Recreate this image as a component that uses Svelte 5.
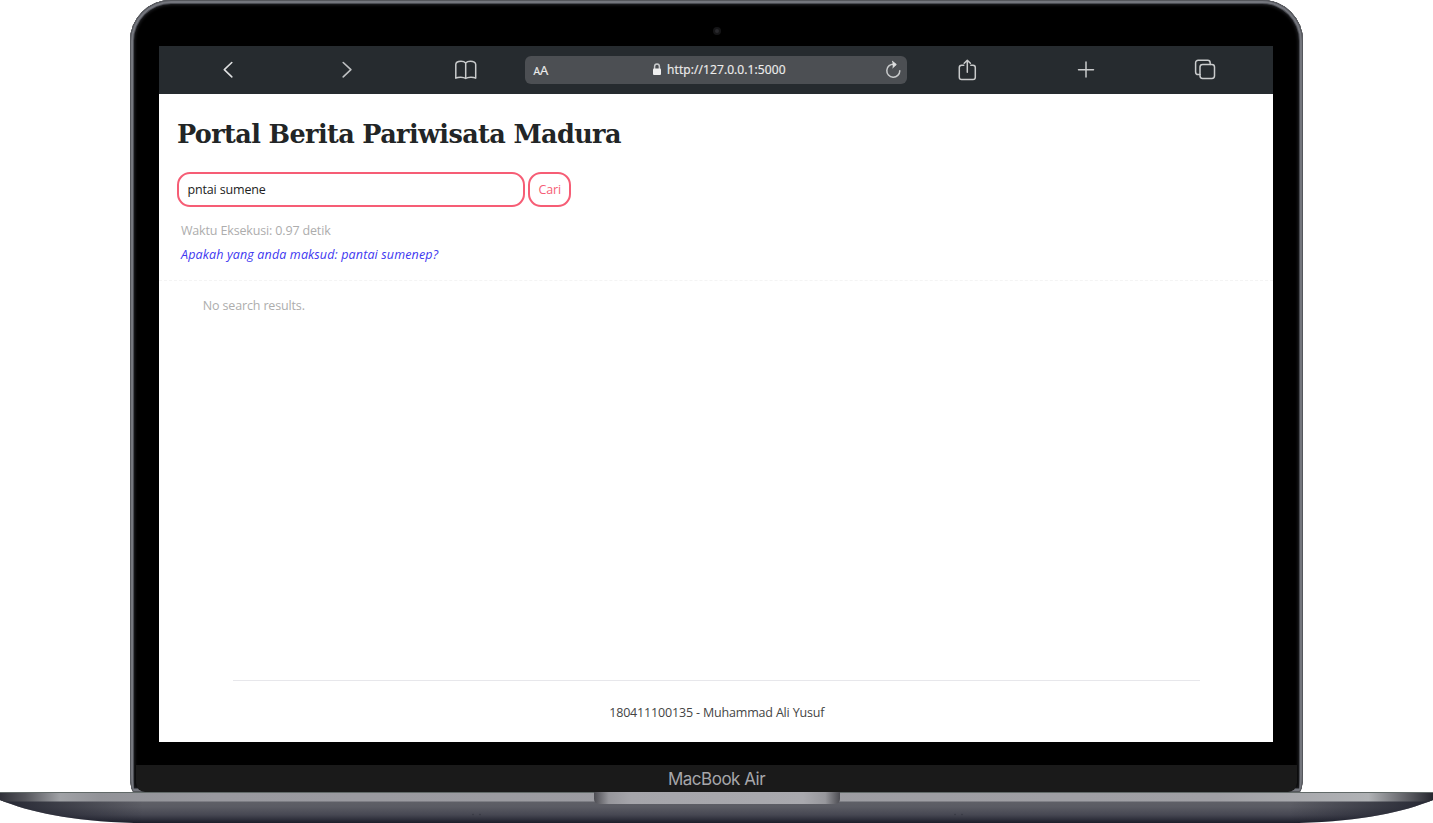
<script>
  let query = $state('pntai sumene');
</script>

<main>
  <section class="lid">
    <i class="camera"></i>
    <div class="screen">
      <nav>
        <span class="cell"><svg width="24" height="24" viewBox="0 0 24 24"><path d="M15.800 4.500 8.300 11.700l7.500 7.200" /></svg></span>
        <span class="cell"><svg width="24" height="24" viewBox="0 0 24 24"><path class="dim" d="m8.200 4.500 7.700 7.200-7.700 7.200" /></svg></span>
        <span class="cell"><svg width="26" height="24" viewBox="0 0 26 24"><path class="thin" d="M12.700 4.900c-1-1.100-2.800-1.700-4.700-1.700-3 0-5.200 1.300-5.200 3.400v13.600c2.300-1.300 7.700-1.300 9.900.3 2.300-1.600 7.700-1.600 10-.3V6.600c0-2.100-2.200-3.400-5.200-3.400-2 0-3.800.6-4.800 1.700v15.600" /></svg></span>
        <div class="address">
          <span class="size"><small>A</small>A</span>
          <span class="url"><svg width="10" height="13" viewBox="0 0 10 13"><path class="thin" d="M2.600 6V3.600a2.400 2.600 0 0 1 4.800 0V6" /><rect x="1" y="5.500" width="8" height="6.500" rx="1" class="solid" /></svg>http://127.0.0.1:5000</span>
          <svg class="reload" width="18" height="20" viewBox="0 0 18 20"><path class="thin" d="M10 4.200A6.500 6.500 0 1 0 15.800 10.700" /><path class="head" d="M8.400 1.300 12.300 4.500 8.800 7.700" /></svg>
        </div>
        <span class="cell"><svg width="24" height="24" viewBox="0 0 24 24"><path class="thin" d="M8.800 7.200H6.600A2.300 2.300 0 0 0 4.300 9.500v9.700a2.300 2.300 0 0 0 2.300 2.300h11.400a2.300 2.300 0 0 0 2.300-2.300v-9.700a2.300 2.300 0 0 0-2.300-2.300h-2.200M12.300 14.300V2.400M9.200 5.200 12.300 2.200l3.100 3" /></svg></span>
        <span class="cell"><svg width="24" height="24" viewBox="0 0 24 24"><path class="thin" d="M4.500 11.700h15M12 4.100v15" /></svg></span>
        <span class="cell"><svg width="24" height="24" viewBox="0 0 24 24"><path class="thin" d="M7 16.600H5.200a2.600 2.600 0 0 1-2.600-2.600V4.900a2.600 2.600 0 0 1 2.600-2.600h9.400a2.600 2.600 0 0 1 2.600 2.600v1.500" /><rect class="thin" x="7" y="6.500" width="14.500" height="13.900" rx="2.600" /></svg></span>
      </nav>
      <article>
        <h1>Portal Berita Pariwisata Madura</h1>
        <form onsubmit={(e) => e.preventDefault()}>
          <input bind:value={query} spellcheck="false" />
          <button>Cari</button>
        </form>
        <p class="time">Waktu Eksekusi: 0.97 detik</p>
        <p class="hint"><em>Apakah yang anda maksud: pantai sumenep?</em></p>
        <div class="divider"></div>
        <p class="none">No search results.</p>
        <footer><span>180411100135 - Muhammad Ali Yusuf</span></footer>
      </article>
    </div>
    <div class="chin"><span>MacBook Air</span></div>
  </section>
  <svg class="base" width="1433" height="31" viewBox="0 0 1433 31">
    <defs>
      <linearGradient id="deck"><stop offset="0" stop-color="#303139" /><stop offset=".018" stop-color="#56575d" /><stop offset=".042" stop-color="#a0a2a6" /><stop offset=".07" stop-color="#929398" /><stop offset=".15" stop-color="#99999f" /><stop offset=".85" stop-color="#a0a0a5" /><stop offset=".955" stop-color="#b0b2b5" /><stop offset=".985" stop-color="#55565c" /><stop offset="1" stop-color="#25262e" /></linearGradient>
      <linearGradient id="belly" x2="0" y2="1"><stop offset="0" stop-color="#606168" /><stop offset=".3" stop-color="#5a5b63" /><stop offset=".65" stop-color="#464752" /><stop offset="1" stop-color="#1c1e2a" /></linearGradient>
      <linearGradient id="notch"><stop offset="0" stop-color="#4c4c52" /><stop offset=".06" stop-color="#96969b" /><stop offset=".15" stop-color="#a5a5aa" /><stop offset=".85" stop-color="#a9a9ae" /><stop offset=".94" stop-color="#97979c" /><stop offset="1" stop-color="#4c4c52" /></linearGradient>
      <linearGradient id="edge"><stop offset="0" stop-color="#1c1e2a" stop-opacity=".85" /><stop offset=".1" stop-color="#1c1e2a" stop-opacity="0" /><stop offset=".9" stop-color="#1c1e2a" stop-opacity="0" /><stop offset="1" stop-color="#1c1e2a" stop-opacity=".85" /></linearGradient>
    </defs>
    <path d="M0 8C30 20 70 29 134 31H1299C1363 29 1403 20 1433 8Z" fill="url(#belly)" />
    <path d="M0 8C30 20 70 29 134 31H1299C1363 29 1403 20 1433 8Z" fill="url(#edge)" />
    <path d="M0 0H1433V8L1429 9.500H4L0 8Z" fill="url(#deck)" />
    <path d="M0 .5H1433" stroke="#626a69" />
    <path d="M594 0H840V7q0 5-6 5H600q-6 0-6-5Z" fill="url(#notch)" />
    <g fill="#363842"><circle cx="473" cy="22.500" r=".8" /><circle cx="480" cy="22.500" r=".8" /><circle cx="955" cy="22.500" r=".8" /><circle cx="962" cy="22.500" r=".8" /></g>
  </svg>
</main>

<style>
  :global(body) { margin: 0; background: #fff; overflow: hidden; }
  main { width: 1433px; height: 823px; overflow: hidden; font-family: "Open Sans", sans-serif; }
  .lid { box-sizing: border-box; position: relative; width: 1173px; height: 792px; margin-left: 130px; padding: 46px 29px 0; border-radius: 41px 41px 4px 4px / 41px 41px 18px 18px; background: #000; box-shadow: inset 0 0 0 1px #55575c, inset 0 0 0 3px #74767d, inset 0 0 0 4px #494b51, inset 0 0 3px 5px #202124; overflow: hidden; }
  .camera { position: absolute; left: 583px; top: 27px; width: 4px; height: 4px; border: 2px solid #151517; border-radius: 50%; background: #29292d; }
  .screen { width: 1114.200px; height: 696px; background: #fff; display: flex; flex-direction: column; margin-left: .3px; }
  nav { box-sizing: border-box; height: 47.500px; flex: none; display: flex; align-items: center; padding-left: 9.100px; background: #262b2f; }
  .cell { width: 119px; flex: none; display: flex; justify-content: center; }
  nav svg { fill: none; stroke: #dedfe0; stroke-width: 1.600; stroke-linecap: round; stroke-linejoin: round; }
  nav .thin { stroke-width: 1.500; stroke: #c9cbcc; }
  nav .dim { stroke: #bfc1c3; }
  nav .solid { fill: #efefef; stroke: none; }
  nav .head { fill: #dedfe0; stroke-width: 1; }
  .address { box-sizing: border-box; width: 382px; height: 28px; flex: none; border-radius: 6px; background: #4c4f53; color: #ececec; display: flex; align-items: center; justify-content: space-between; padding: 0 5px 0 8px; }
  .size { font-size: 13px; width: 20px; white-space: nowrap; -webkit-text-stroke: .2px #ececec; }
  .size small { font-size: 10.500px; }
  .url { display: flex; align-items: center; gap: 5px; font-size: 12px; letter-spacing: .1px; white-space: nowrap; -webkit-text-stroke: .2px #ececec; }
  article { flex: 1; min-height: 0; display: flex; flex-direction: column; }
  h1 { margin: 22px 0 0 17.700px; height: 36px; font: bold 25.500px/36px "DejaVu Serif", serif; letter-spacing: -.61px; color: #222526; white-space: nowrap; }
  form { display: flex; gap: 3px; margin: 20px 0 0 17.700px; }
  input, button { box-sizing: border-box; border: 2px solid #f65d75; background: #fff; border-radius: 13px; font: 12.500px "Open Sans", sans-serif; letter-spacing: -.15px; outline: 0; margin: 0; }
  input { width: 348px; height: 35px; padding: 0 8.500px; color: #222; }
  button { width: 43.500px; height: 35px; padding: 0; color: #f65d75; margin-top: .5px; }
  p { margin: 0; font-size: 12.500px; letter-spacing: -.15px; white-space: nowrap; }
  .time, .none { color: #adadad; }
  .time { height: 24px; line-height: 24px; margin: 12px 0 0 21.600px; }
  .hint { height: 24px; line-height: 24px; margin-left: 21.700px; color: #4037f0; letter-spacing: .14px; }
  .divider { height: 0; margin-top: 13px; border-top: 1px dashed #f4f4f4; }
  .none { height: 24px; line-height: 24px; margin: 13px 0 0 43.500px; }
  footer { margin: auto 73.300px 0 74px; height: 62px; border-top: 1px solid #e7e7eb; box-sizing: border-box; text-align: center; font-size: 12.500px; letter-spacing: -.17px; line-height: 63px; color: #444; }
  .chin { position: absolute; left: 6px; right: 6px; top: 765px; height: 27px; background: #1a1a1a; border-radius: 0 0 9px 9px; text-align: center; font: 17px/28px Inter, sans-serif; letter-spacing: -.5px; color: #a6a6aa; }
  .base { display: block; }
</style>
